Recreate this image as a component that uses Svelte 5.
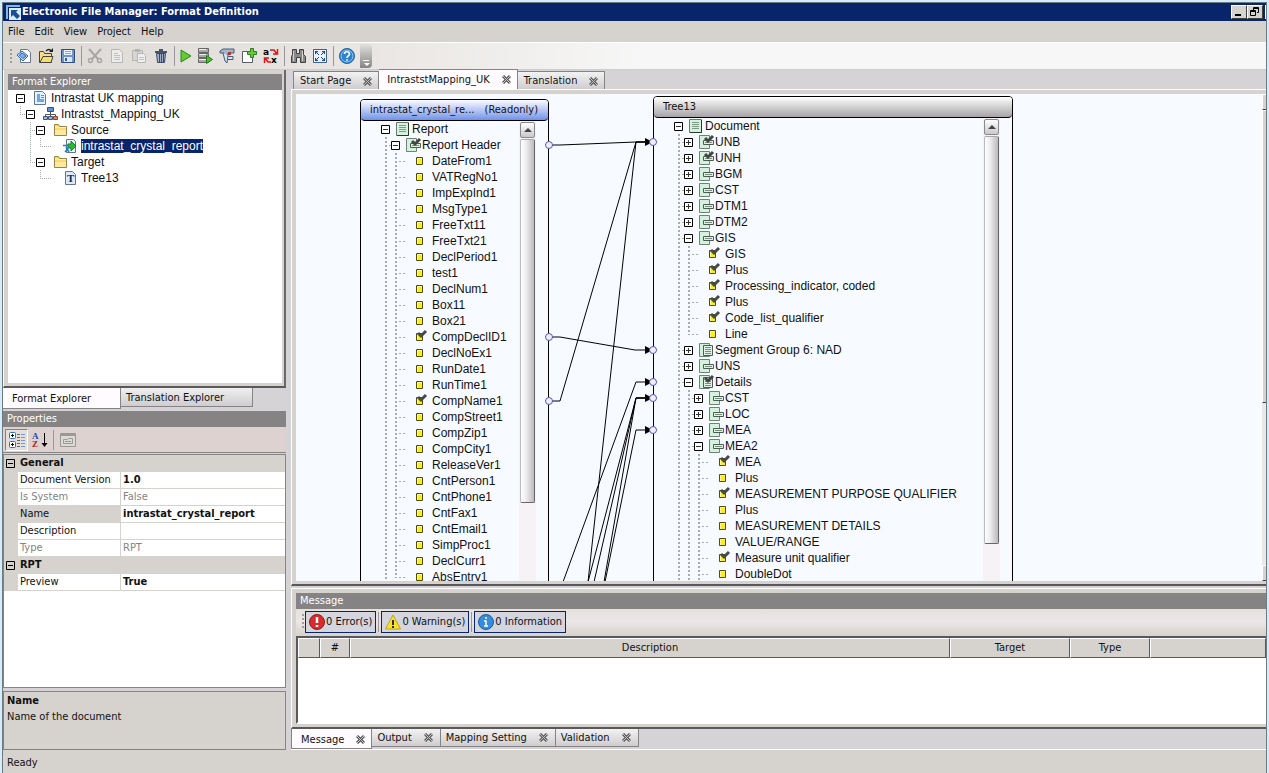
<script lang="ts">
	type Row = { guides: string; icon: string; text: string; open?: boolean };

	// guides: one character per ancestor column
	// "|" line, "+" tee, "L" corner, " " nothing
	const explorerRows: Row[] = [
		{ guides: "", icon: "doc", text: "Intrastat UK mapping", open: true },
		{ guides: "L", icon: "net", text: "Intrastst_Mapping_UK", open: true },
		{ guides: " +", icon: "folder", text: "Source", open: true },
		{ guides: " |L", icon: "report", text: "intrastat_crystal_report" },
		{ guides: " L", icon: "folder", text: "Target", open: true },
		{ guides: "  L", icon: "tree", text: "Tree13" },
	];

	const fields = [
		"DateFrom1", "VATRegNo1", "ImpExpInd1", "MsgType1", "FreeTxt11", "FreeTxt21",
		"DeclPeriod1", "test1", "DeclNum1", "Box11", "Box21", "CompDeclID1",
		"DeclNoEx1", "RunDate1", "RunTime1", "CompName1", "CompStreet1", "CompZip1",
		"CompCity1", "ReleaseVer1", "CntPerson1", "CntPhone1", "CntFax1", "CntEmail1",
		"SimpProc1", "DeclCurr1", "AbsEntry1",
	];
	const mapped = ["CompDeclID1", "CompName1"];

	const sourceRows: Row[] = [
		{ guides: "", icon: "page", text: "Report", open: true },
		{ guides: "+", icon: "segment-check", text: "Report Header", open: true },
		...fields.map((text, i) => ({
			guides: i == fields.length - 1 ? "|L" : "|+",
			icon: mapped.includes(text) ? "leaf-check" : "leaf",
			text,
		})),
	];

	const targetRows: Row[] = [
		{ guides: "", icon: "page", text: "Document", open: true },
		{ guides: "+", icon: "segment-check", text: "UNB", open: false },
		{ guides: "+", icon: "segment-check", text: "UNH", open: false },
		{ guides: "+", icon: "segment", text: "BGM", open: false },
		{ guides: "+", icon: "segment", text: "CST", open: false },
		{ guides: "+", icon: "segment", text: "DTM1", open: false },
		{ guides: "+", icon: "segment", text: "DTM2", open: false },
		{ guides: "+", icon: "segment", text: "GIS", open: true },
		{ guides: "|+", icon: "leaf-check", text: "GIS" },
		{ guides: "|+", icon: "leaf-check", text: "Plus" },
		{ guides: "|+", icon: "leaf-check", text: "Processing_indicator, coded" },
		{ guides: "|+", icon: "leaf-check", text: "Plus" },
		{ guides: "|+", icon: "leaf-check", text: "Code_list_qualifier" },
		{ guides: "|L", icon: "leaf", text: "Line" },
		{ guides: "+", icon: "group", text: "Segment Group 6: NAD", open: false },
		{ guides: "+", icon: "segment", text: "UNS", open: false },
		{ guides: "+", icon: "group-check", text: "Details", open: true },
		{ guides: "|+", icon: "segment", text: "CST", open: false },
		{ guides: "|+", icon: "segment", text: "LOC", open: false },
		{ guides: "|+", icon: "segment", text: "MEA", open: false },
		{ guides: "|+", icon: "segment", text: "MEA2", open: true },
		{ guides: "||+", icon: "leaf-check", text: "MEA" },
		{ guides: "||+", icon: "leaf", text: "Plus" },
		{ guides: "||+", icon: "leaf-check", text: "MEASUREMENT PURPOSE QUALIFIER" },
		{ guides: "||+", icon: "leaf", text: "Plus" },
		{ guides: "||+", icon: "leaf", text: "MEASUREMENT DETAILS" },
		{ guides: "||+", icon: "leaf", text: "VALUE/RANGE" },
		{ guides: "||+", icon: "leaf-check", text: "Measure unit qualifier" },
		{ guides: "||+", icon: "leaf", text: "DoubleDot" },
	];

	const wires = [
		"253,51 264,51 340,48 357,48",
		"253,307 264,307 340,48 357,48",
		"292,488 340,48 357,48",
		"253,243 264,243 339,256 357,256",
		"267,488 340,288 357,288",
		"292,488 340,304 357,304",
		"298,488 340,304 357,304",
		"308,488 340,304 357,304",
		"309,488 340,336 357,336",
	];
	const outPorts = [51, 243, 307];
	const inPorts = [48, 256, 288, 304, 336];

	const tools = [
		["new", "open", "save"],
		["cut", "copy", "paste", "delete"],
		["run", "server", "caliper", "add", "translate"],
		["find", "fit"],
		["help"],
	];
	const faded = ["cut", "copy", "paste"];

	const properties = [
		{ group: "General" },
		{ name: "Document Version", value: "1.0" },
		{ name: "Is System", value: "False", readonly: true },
		{ name: "Name", value: "intrastat_crystal_report" },
		{ name: "Description", value: "" },
		{ name: "Type", value: "RPT", readonly: true },
		{ group: "RPT" },
		{ name: "Preview", value: "True" },
	];

	const columns = ["", "#", "Description", "Target", "Type", ""];

	let selected = $state("intrastat_crystal_report");
	let property = $state("Name");
	let documentTab = $state("IntraststMapping_UK");
	let messageTab = $state("Message");
	let explorerTab = $state("Format Explorer");
</script>

{#snippet icon(name: string)}
	<svg class="icon" width="16" height="16" viewBox="0 0 16 16" aria-hidden="true">
		{#if name == "new"}
			<path d="M4.500 1.500h7l3 3v10h-10z" fill="#fff" stroke="#68778d" />
			<path d="M1 7l5-4 6 5-5 5z" fill="#b9d8f8" stroke="#3568b4" />
			<path d="M3.500 7l2.500-2 4 3-3 2.500z" fill="#7fb2ea" stroke="#3568b4" />
		{:else if name == "open"}
			<path d="M1.500 14.500v-11h4l1 2h7v9z" fill="#f7df8a" stroke="#40454d" />
			<path d="M2 14.500l3-6h10l-2 6z" fill="#ffdc67" stroke="#40454d" />
			<path d="M8 3c2-2 4-2 5 0" fill="none" stroke="#222" stroke-width="1.500" /><path d="M11 4h4V0z" fill="#222" />
		{:else if name == "save"}
			<path d="M1.500 1.500h13v13h-13z" fill="#7396c9" stroke="#304b7d" />
			<path d="M4 2h8v5H4z" fill="#e8f2ff" /><path d="M5 3.500h6M5 5.500h6" stroke="#8eabd2" /><path d="M4 9h8v5H4z" fill="#dce8f7" /><path d="M5 10h2v3H5z" fill="#355b91" />
		{:else if name == "cut"}
			<path d="M2 1l9 10M14 1L5 11" stroke="#9a9a9a" stroke-width="2" />
			<circle cx="3.500" cy="12.500" r="2" fill="none" stroke="#999" stroke-width="1.500" /><circle cx="12.500" cy="12.500" r="2" fill="none" stroke="#999" stroke-width="1.500" />
		{:else if name == "copy"}
			<path d="M2.500 1.500h8l3 3v10h-11z" fill="#f0f0f0" stroke="#b0aeac" /><path d="M5 5.500h4M5 7.500h6M5 9.500h6M5 11.500h6" stroke="#bbb" />
		{:else if name == "paste"}
			<path d="M1.500 2.500h10v10h-10z" fill="#d5d5d5" stroke="#aaa" /><path d="M4 1h5v3H4z" fill="#aaa" /><path d="M6.500 5.500h6l2 2v7h-8z" fill="#f4f4f4" stroke="#aaa" /><path d="M8 9.500h5M8 11.500h5" stroke="#bbb" />
		{:else if name == "delete"}
			<path d="M2 3h12v2H2zM6 1h4v2H6z" fill="#46536e" /><path d="M3.500 5.500h9l-1 9h-7z" fill="#a3b0c6" stroke="#3d4962" /><path d="M6.500 6v8M8.500 6v8M10.500 6v8" stroke="#3d4962" />
		{:else if name == "run"}
			<path d="M3 2l10 6-10 6z" fill="#67c934" stroke="#268a1d" />
		{:else if name == "server"}
			<path d="M1.500.5h10v4h-10zM1.500 5.500h10v4h-10zM1.500 10.500h10v4h-10z" fill="#a8a8a8" stroke="#666" /><path d="M2 1.500h7M2 6.500h7M2 11.500h7" stroke="#eee" /><path d="M9.500 7.500l6 4-6 4z" fill="#50bd29" stroke="#23781a" />
		{:else if name == "caliper"}
			<path d="M1 3l3-2h11v4H9v2H5V5H1z" fill="#a5b6d0" stroke="#4b5a79" /><path d="M4 5l2 8 2 2 1-8M9 8.500h5v3H9" fill="#d9e2f1" stroke="#4b5a79" /><path d="M9 4h3v3H9z" fill="#a33b31" />
		{:else if name == "add"}
			<path d="M1.500 3.500h10v11h-10z" fill="#fff" stroke="#555c66" /><path d="M9.500.5h3v3h3v3h-3v3h-3v-3h-3v-3h3z" fill="#6cc73e" stroke="#28801f" />
		{:else if name == "translate"}
			<text x="0" y="7" class="glyph">a</text><text x="8" y="15" class="glyph">x</text>
			<path d="M7 2h4l3 4M14.500 1v5H10M8 14H5L2 10M1.500 15v-5H6" fill="none" stroke="#e01414" stroke-width="1.500" />
		{:else if name == "find"}
			<path d="M2.500 1.500h4v4h3v-4h4v5l2 2v6h-5v-5h-4v5h-5v-6l1-2z" fill="#8a8a8a" stroke="#414141" /><path d="M3.500 3v10M12.500 3v10" stroke="#d0d0d0" />
		{:else if name == "fit"}
			<path d="M1.500 1.500h13v13h-13z" fill="#eaf3ff" stroke="#42608c" /><path d="M3 3h3.500L3 6.500zM13 3v3.500L9.500 3zM3 13V9.500L6.500 13zM13 13H9.500L13 9.500z" fill="#214a86" /><path d="M5 5l2 2M11 5L9 7M5 11l2-2M11 11L9 9" stroke="#214a86" />
		{:else if name == "help"}
			<circle cx="8" cy="8" r="7.500" fill="#2b83cf" stroke="#225e9a" /><circle cx="8" cy="8" r="6" fill="none" stroke="#8cc5f2" />
			<path d="M5.500 6c0-3 5-3 5 0 0 2-2.500 1.800-2.500 4M8 11.200v1.600" fill="none" stroke="#fff" stroke-width="1.700" />
		{:else if name == "doc"}
			<path d="M1.500 1.500h8l3 3v10h-11z" fill="#e5f1ff" stroke="#65758f" /><path d="M4 4h3v8H4zM7 9h4v3H7z" fill="#69a9e8" /><path d="M8 5.500h3M8 7.500h3" stroke="#4c8fd4" />
		{:else if name == "net"}
			<path d="M7.500 6v5M2.500 11V8.500h10V11" fill="none" stroke="#555" /><path d="M4.500 1.500h6v4h-6z" fill="#648fd3" stroke="#394f82" /><path d="M.5 10.500h4v3h-4zM5.500 10.500h4v3h-4z" fill="#9fb6de" stroke="#435577" /><path d="M10.500 10.500h4v3h-4z" fill="#e08a5c" stroke="#8d4632" />
		{:else if name == "folder"}
			<path d="M1.500 13.500v-11h4l1 2h7v9z" fill="#f9dc75" stroke="#9a8348" /><path d="M2 8h11v5H2z" fill="#ffe9a0" /><path d="M2 5.500h11" stroke="#fff5bb" />
		{:else if name == "report"}
			<path d="M3.500 1.500h7l2 2v11h-9z" fill="#eaf3ff" stroke="#65758f" /><path d="M5 6h3V3l5 5-5 5v-3H5z" fill="#2cba31" stroke="#168420" /><path d="M0 7.500h5M3 9l3 5M6 9l-4 5" stroke="#287bc2" stroke-width="1.500" />
		{:else if name == "tree"}
			<path d="M2.500 1.500h7l3 3v10h-10z" fill="#dce9f8" stroke="#65758f" /><text x="4" y="12" class="letter">T</text>
		{:else if name == "page"}
			<path d="M.5 1.500h12v13H.5z" fill="#d4f3dd" stroke="#6a7a70" /><path d="M12.500 2v12.500H1" fill="none" stroke="#27382e" /><path d="M3 4.500h7M3 6.500h7M3 8.500h7M3 10.500h7" stroke="#7d9a87" />
		{:else if name.startsWith("segment") || name.startsWith("group")}
			<path d="M.5 1.500h10v13H.5z" fill="#d4f3dd" stroke="#718078" />
			{#if name.startsWith("group")}
				<path d="M4.500 3.500h9v10h-9z" fill="#e2f2e6" stroke="#4c5c51" /><path d="M6 5.500h6M6 7.500h6M6 9.500h6M6 11.500h6" stroke="#7d8c82" />
			{:else}
				<path d="M4.500 6.500h10v4h-10z" fill="#ddf3e2" stroke="#4c5c51" /><path d="M6 8.500h7" stroke="#7d8c82" />
			{/if}
			{#if name.endsWith("check")}
				<path d="M6 4l3 3 5-5" fill="none" stroke="#454545" stroke-width="3" />
			{/if}
		{:else if name.startsWith("leaf")}
			<path d="M.5 4.500h6v7h-6z" fill="#ffed18" stroke="#4d4b12" /><path d="M1.500 11V5.500H6" fill="none" stroke="#fff98b" />
			{#if name == "leaf-check"}
				<path d="M2 4l3 3 5-5" fill="none" stroke="#494949" stroke-width="3" />
			{/if}
		{:else if name == "error"}
			<circle cx="8" cy="8" r="7.500" fill="#d92b2c" stroke="#8f1c20" /><path d="M8 3v6M8 11v2" stroke="#fff" stroke-width="2.500" />
		{:else if name == "warning"}
			<path d="M8 1l7.500 14H.5z" fill="#f6e32e" stroke="#c3a411" /><path d="M8 6v5M8 12v2" stroke="#343000" stroke-width="2" />
		{:else if name == "info"}
			<circle cx="8" cy="8" r="7.500" fill="#348cdc" stroke="#1e5d9e" /><path d="M8 3v2M6 7h2v5M6 12h4" fill="none" stroke="#fff" stroke-width="1.500" />
		{:else if name == "categories"}
			<rect x=".5" y=".5" width="6" height="6" rx="1" fill="#fff" stroke="#2d71bd" /><rect x=".5" y="9.500" width="6" height="6" rx="1" fill="#fff" stroke="#2d71bd" />
			<path d="M2 3.500h3M3.500 2v3M2 12.500h3M3.500 11v3" stroke="#000" /><path d="M8 2.500h3M8 5.500h3M8 8.500h3M8 11.500h3M8 14.500h3" stroke="#666" /><path d="M12 2.500h4M12 5.500h4M12 8.500h4M12 11.500h4M12 14.500h4" stroke="#7898d0" />
		{:else if name == "sort"}
			<text x="0" y="7" class="sort-a">A</text><text x="0" y="15" class="sort-z">Z</text><path d="M12.500 1v13" stroke="#000" /><path d="M9.500 11h6l-3 4z" />
		{:else if name == "pages"}
			<path d="M.5 1.500h15v13H.5z" fill="#ddd9d4" stroke="#9b9995" /><path d="M1 3h14" stroke="#9b9995" stroke-width="2" /><path d="M3.500 7.500h4l1-1h4v5h-9zM5 9.500h6" fill="none" stroke="#9b9995" />
		{/if}
	</svg>
{/snippet}

{#snippet tree(rows: Row[])}
	<ul class="rows">
		{#each rows as row}
			<li class="row">
				{#each row.guides as guide}
					<span class="guide" class:line={guide == "|" || guide == "+"} class:corner={guide == "L"} class:tick={guide == "+" || guide == "L"}></span>
				{/each}
				{#if row.open === undefined}
					<span class="blank"></span>
				{:else}
					<button class="expander" aria-label={row.open ? "Collapse " + row.text : "Expand " + row.text}>
						<svg width="9" height="9" viewBox="0 0 9 9" aria-hidden="true">
							<path d="M.5.5h8v8h-8z" fill="#fff" stroke="#000" />
							<path d={row.open ? "M2 4.500h5" : "M2 4.500h5M4.500 2v5"} stroke="#333" />
						</svg>
					</button>
				{/if}
				{@render icon(row.icon)}
				<button class="label" class:selected={row.text == selected} onclick={() => (selected = row.text)}>{row.text}</button>
			</li>
		{/each}
	</ul>
{/snippet}

{#snippet cross()}
	<svg class="cross" width="9" height="9" viewBox="0 0 9 9" aria-hidden="true">
		<path d="M1 1l7 7M8 1L1 8" stroke="#5a5a5a" stroke-width="3" />
		<path d="M1 1l7 7M8 1L1 8" stroke="#c4c4c4" />
	</svg>
{/snippet}

{#snippet scrollbar(kind: string)}
	<div class="scrollbar {kind}">
		<button class="scroll-up" aria-label="Scroll up">
			<svg width="8" height="4" viewBox="0 0 8 4" aria-hidden="true"><path d="M0 4l4-4 4 4z" fill="#444" /></svg>
		</button>
		<div class="thumb"></div>
	</div>
{/snippet}

<div class="window">
	<header class="title">
		<svg width="15" height="15" viewBox="0 0 15 15" aria-hidden="true">
			<path d="M0 0h14v2H2v12H0z" fill="#7fb8e8" /><path d="M3 3h12v12H3z" fill="#d9ecfa" /><path d="M5 5h7l-2 2 4 4-3 3-4-4-2 2z" fill="#1a4f96" />
		</svg>
		<h1>Electronic File Manager: Format Definition</h1>
		<button class="caption" aria-label="Minimize">
			<svg width="12" height="10" viewBox="0 0 12 10" aria-hidden="true"><path d="M2 7h6v2H2z" /></svg>
		</button>
		<button class="caption" aria-label="Restore">
			<svg width="12" height="10" viewBox="0 0 12 10" aria-hidden="true">
				<path d="M4.500 3V.5h5v5H8M4 1.500h6M1.500 3.500h5v5h-5zM1 4.500h6" fill="none" stroke="#000" />
			</svg>
		</button>
		<span class="clipped"></span>
	</header>

	<nav class="menu">
		{#each ["File", "Edit", "View", "Project", "Help"] as item}
			<button>{item}</button>
		{/each}
	</nav>

	<div class="toolbar">
		<span class="grip"></span>
		{#each tools as group, i}
			{#if i > 0}<span class="separator"></span>{/if}
			{#each group as tool}
				<button class="tool" class:faded={faded.includes(tool)} class:narrow={tool == "run"} aria-label={tool}>{@render icon(tool)}</button>
			{/each}
		{/each}
		<button class="overflow" aria-label="More tools">
			<svg width="7" height="6" viewBox="0 0 7 6" aria-hidden="true"><path d="M0 .5h6" stroke="#fff" /><path d="M1 3h6L4 6z" fill="#fff" /></svg>
		</button>
	</div>

	<main class="docks">
		<aside class="left">
			<section class="explorer">
				<h2>Format Explorer</h2>
				<div class="explorer-tree">{@render tree(explorerRows)}</div>
			</section>
			<div class="explorer-tabs">
				{#each ["Format Explorer", "Translation Explorer"] as tab}
					<button class="side-tab" class:active={explorerTab == tab} onclick={() => (explorerTab = tab)}>{tab}</button>
				{/each}
			</div>
			<section class="properties">
				<h2>Properties</h2>
				<div class="property-tools">
					<button class="pressed" aria-label="Categorized">{@render icon("categories")}</button>
					<button aria-label="Alphabetical">{@render icon("sort")}</button>
					<span class="separator"></span>
					<button aria-label="Property pages">{@render icon("pages")}</button>
				</div>
				<div class="property-grid">
					<table>
						<colgroup>
							<col class="margin-col" />
							<col class="name-col" />
							<col />
						</colgroup>
						<tbody>
							{#each properties as p}
								{#if p.group}
									<tr class="category">
										<td class="margin">
											<svg width="9" height="9" viewBox="0 0 9 9" aria-hidden="true"><path d="M.5.5h8v8h-8zM2 4.500h5" fill="none" stroke="#000" /></svg>
										</td>
										<th colspan="2">{p.group}</th>
									</tr>
								{:else}
									<tr class:readonly={p.readonly} class:current={property == p.name} onclick={() => (property = p.name ?? "")}>
										<td class="margin"></td>
										<th scope="row">{p.name}</th>
										<td class="value">{p.value}</td>
									</tr>
								{/if}
							{/each}
						</tbody>
					</table>
				</div>
				<div class="hint">
					<strong>Name</strong>
					<p>Name of the document</p>
				</div>
			</section>
		</aside>

		<div class="right">
			<div class="tabs top">
				{#each ["Start Page", "IntraststMapping_UK", "Translation"] as tab}
					<button class="tab" class:active={documentTab == tab} onclick={() => (documentTab = tab)}>{tab}{@render cross()}</button>
				{/each}
			</div>
			<section class="frame design">
				<div class="canvas">
					<article class="node source">
						<h3><span>intrastat_crystal_re...</span><span>(Readonly)</span></h3>
						<div class="node-body">
							{@render tree(sourceRows)}
							{@render scrollbar("short")}
						</div>
					</article>
					<article class="node target">
						<h3>Tree13</h3>
						<div class="node-body">
							{@render tree(targetRows)}
							{@render scrollbar("long")}
						</div>
					</article>
					<svg class="wires" aria-hidden="true">
						{#each wires as points}
							<polyline {points} fill="none" stroke="#000" />
						{/each}
						{#each inPorts as y}
							<path d="M349 {y - 4}l8 4-8 4z" />
							<circle cx="357" cy={y} r="3.500" />
						{/each}
						{#each outPorts as y}
							<circle cx="253" cy={y} r="3.500" />
						{/each}
					</svg>
				</div>
				<div class="edge-scroll">
					<span class="edge-button"></span>
					<span class="edge-thumb"></span>
					<span class="edge-space"></span>
					<span class="edge-button"></span>
				</div>
			</section>

			<section class="frame messages">
				<h2>Message</h2>
				<div class="filters">
					<span class="grip"></span>
					<button class="filter">{@render icon("error")}0 Error(s)</button>
					<span class="separator"></span>
					<button class="filter">{@render icon("warning")}0 Warning(s)</button>
					<span class="separator"></span>
					<button class="filter">{@render icon("info")}0 Information</button>
				</div>
				<div class="list">
					<table>
						<thead>
							<tr>
								{#each columns as column, i}
									<th class="col-{i}">{column}</th>
								{/each}
							</tr>
						</thead>
					</table>
				</div>
			</section>
			<div class="tabs bottom">
				{#each ["Message", "Output", "Mapping Setting", "Validation"] as tab}
					<button class="tab" class:active={messageTab == tab} onclick={() => (messageTab = tab)}>{tab}{@render cross()}</button>
				{/each}
			</div>
		</div>
	</main>

	<footer class="status">Ready</footer>
</div>

<style>
	:global(body) {
		margin: 0;
		background: #d3eefa;
	}
	:global(#app) {
		box-sizing: border-box;
		height: 100vh;
		padding: 2px 2px 0;
		overflow: hidden;
	}
	.window,
	.window * {
		box-sizing: border-box;
	}
	.window {
		display: flex;
		flex-direction: column;
		height: 100%;
		min-height: 600px;
		border: solid #6f7a80;
		border-width: 1px 1px 0;
		background: #d6d3ce;
		color: #111;
		font: 11px/14px "DejaVu Sans Condensed", "DejaVu Sans", sans-serif;
		overflow: hidden;
	}
	button {
		margin: 0;
		padding: 0;
		border: 0;
		background: none;
		color: inherit;
		font: inherit;
		white-space: nowrap;
	}
	svg {
		display: block;
		flex: none;
	}
	h1,
	h2,
	h3,
	p,
	ul {
		margin: 0;
		padding: 0;
		font: inherit;
	}
	h2 {
		flex: none;
		height: 16px;
		padding: 0 4px;
		line-height: 15px;
		background: #858384;
		color: #fff;
	}

	.title {
		display: flex;
		align-items: center;
		flex: none;
		height: 18px;
		padding-left: 3px;
		background: #08246b;
		color: #fff;
	}
	.title h1 {
		flex: 1;
		padding-left: 1px;
		font-weight: bold;
	}
	.caption {
		display: grid;
		place-items: center;
		width: 16px;
		height: 14px;
		background: #d6d3ce;
		border: 1px solid;
		border-color: #fff #404040 #404040 #fff;
	}
	.clipped {
		width: 1px;
		height: 14px;
		margin-left: 2px;
		background: #fff;
	}
	.menu {
		display: flex;
		flex: none;
		gap: 10px;
		height: 21px;
		padding: 1px 0 0 5px;
	}

	.toolbar {
		display: flex;
		align-items: center;
		flex: none;
		height: 28px;
		padding-left: 4px;
		border-top: 1px solid #fff;
		border-bottom: 1px solid #cfccd0;
		background: linear-gradient(90deg, #dddad6, #e9e6e3 370px, #ece9e6 420px, #f7f7f7 640px);
	}
	.grip {
		width: 2px;
		height: 15px;
		margin: 0 1px 0 3px;
		background: repeating-linear-gradient(#a09da0 0 2px, transparent 2px 4px);
	}
	.tool {
		display: grid;
		place-items: center;
		width: 22px;
		height: 22px;
	}
	.tool.narrow {
		width: 17px;
	}
	.tool.faded {
		opacity: 0.8;
	}
	.separator {
		width: 1px;
		height: 20px;
		margin: 0 2px;
		background: #9a979a;
	}
	.overflow {
		display: flex;
		align-items: flex-end;
		justify-content: center;
		width: 12px;
		height: 24px;
		margin-left: 2px;
		padding-bottom: 2px;
		border-radius: 0 4px 4px 0;
		background: linear-gradient(#e2e0de, #858585);
	}
	.glyph {
		font: bold 9px "DejaVu Sans", sans-serif;
	}
	.letter {
		font: bold 11px "Liberation Serif", serif;
		fill: #17294f;
	}
	.sort-a,
	.sort-z {
		font: bold 9px "Liberation Serif", serif;
		fill: #2446ab;
	}
	.sort-z {
		fill: #a52222;
	}

	.docks {
		display: flex;
		flex: 1;
		gap: 5px;
		min-height: 0;
		background: #d5d3d6;
	}
	.left {
		display: grid;
		grid-template-rows: 318px 23px minmax(0, 1fr);
		flex: none;
		width: 283px;
	}
	.explorer {
		display: flex;
		flex-direction: column;
		padding: 4px 2px 3px 4px;
		background: #d6d3ce;
		border: solid;
		border-color: #fff #6a686a #5a585a #fff;
		border-width: 0 2px 2px 1px;
	}
	.explorer-tree {
		flex: 1;
		padding-left: 8px;
		background: #fff;
		--icon-gap: 7px;
		--label-gap: 2px;
		--guide-width: 1px;
	}
	.explorer-tabs {
		display: flex;
		align-items: flex-start;
	}
	.side-tab {
		height: 19px;
		padding: 1px 28px 0 5px;
		border: solid #858384;
		border-width: 0 1px 1px 0;
		background: linear-gradient(#f0eff0, #cfcdcf);
		text-align: left;
	}
	.side-tab.active {
		width: 118px;
		height: 21px;
		padding: 2px 0 0 9px;
		background: #fffbff;
	}

	.properties {
		display: flex;
		flex-direction: column;
		min-height: 0;
	}
	.property-tools {
		display: flex;
		align-items: center;
		flex: none;
		height: 26px;
		padding-left: 2px;
		background: #ddd2cf;
		border-bottom: 1px solid #858384;
	}
	.property-tools button {
		display: grid;
		place-items: center;
		width: 23px;
		height: 22px;
	}
	.property-tools .pressed {
		border: 1px solid;
		border-color: #858384 #fff #fff #858384;
		background: #e4dfda;
	}
	.property-grid {
		flex: 1;
		min-height: 0;
		margin-top: 1px;
		border: 1px solid #858384;
		background: #fff;
		overflow: hidden;
	}
	table {
		width: 100%;
		border-collapse: separate;
		border-spacing: 0;
		table-layout: fixed;
	}
	.margin-col {
		width: 14px;
	}
	.name-col {
		width: 103px;
	}
	.property-grid td,
	.property-grid th {
		height: 17px;
		padding: 0 0 0 2px;
		border-bottom: 1px solid #d6d3ce;
		font-weight: normal;
		line-height: 14px;
		text-align: left;
		white-space: nowrap;
	}
	.property-grid .margin {
		background: #d6d3ce;
	}
	.property-grid th {
		border-right: 1px solid #d6d3ce;
	}
	.property-grid .category th {
		background: #d6d3ce;
		font-weight: bold;
	}
	.property-grid .value {
		font-weight: bold;
	}
	.readonly th,
	.property-grid .readonly .value {
		color: #858384;
		font-weight: normal;
	}
	.current th {
		background: #d6d3ce;
	}
	.hint {
		flex: none;
		height: 59px;
		margin-top: 3px;
		padding: 2px 3px;
		border: 1px solid #858384;
		background: #d6d3ce;
	}
	.hint p {
		padding-top: 2px;
	}

	.rows {
		list-style: none;
		font: 12px/16px "Liberation Sans", Arial, sans-serif;
	}
	.row {
		display: flex;
		align-items: center;
		height: 16px;
	}
	.row .icon {
		margin-right: var(--label-gap);
	}
	.guide {
		position: relative;
		flex: none;
		width: 10px;
		height: 16px;
	}
	.line::before,
	.corner::before {
		content: "";
		position: absolute;
		top: 0;
		left: 4px;
		width: var(--guide-width);
		height: 16px;
		background: repeating-linear-gradient(#a8abb0 0 var(--guide-width), transparent var(--guide-width) calc(2 * var(--guide-width)));
	}
	.corner::before {
		height: 8px;
	}
	.tick::after {
		content: "";
		position: absolute;
		top: 8px;
		left: 4px;
		width: 11px;
		height: 1px;
		background: repeating-linear-gradient(90deg, #a8abb0 0 var(--guide-width), transparent var(--guide-width) calc(2 * var(--guide-width)));
	}
	.blank,
	.expander {
		position: relative;
		flex: none;
		width: 10px;
		margin-right: var(--icon-gap);
	}
	.label {
		height: 16px;
		line-height: 16px;
	}
	.label.selected {
		height: 14px;
		line-height: 14px;
		background: #08246b;
		color: #fff;
	}

	.right {
		display: flex;
		flex-direction: column;
		flex: 1;
		min-width: 0;
	}
	.tabs {
		display: flex;
		flex: none;
		align-items: flex-end;
		height: 19px;
		padding-left: 2px;
	}
	.tab {
		display: flex;
		align-items: center;
		gap: 12px;
		height: 18px;
		padding: 1px 6px 0;
		border: 1px solid #858384;
		border-left-width: 0;
		border-bottom-width: 0;
		background: linear-gradient(#f3f2f3, #cfcdcf);
	}
	.tab:first-child {
		border-left-width: 1px;
	}
	.tab.active {
		height: 20px;
		padding: 0 6px 0 8px;
		background: #fffbff;
	}
	.bottom {
		align-items: flex-start;
		height: 21px;
		padding-left: 0;
		border-bottom: 1px solid #fff;
	}
	.bottom .tab {
		padding: 0 7px 0 5px;
		border-width: 0 1px 1px 0;
	}
	.bottom .tab.active {
		padding: 2px 6px 0 9px;
		border-left-width: 1px;
	}

	.frame {
		background: #d6d3ce;
		border: solid;
		border-color: #fff #fff #5a585a;
		border-width: 1px 0 2px 1px;
	}
	.design {
		display: flex;
		flex: 1;
		min-height: 0;
		padding: 4px 0 3px 4px;
		margin-bottom: 2px;
	}
	.canvas {
		position: relative;
		flex: 1;
		background: #f7fbff;
		overflow: hidden;
	}
	.edge-scroll {
		display: flex;
		flex-direction: column;
		flex: none;
		width: 4px;
		background: #ebe9e6;
	}
	.edge-button,
	.edge-thumb {
		height: 16px;
		border: solid;
		border-color: #fff #404040 #404040 #fff;
		border-width: 1px 0 1px 1px;
		background: #d6d3ce;
	}
	.edge-thumb {
		height: 293px;
	}
	.edge-space {
		flex: 1;
	}
	.node {
		position: absolute;
		top: 5px;
		left: 64px;
		width: 189px;
		height: 700px;
		border: 1px solid #000;
		border-radius: 4px;
		background: #f7fbff;
		--icon-gap: 5px;
		--label-gap: 0px;
		--guide-width: 2px;
	}
	.target {
		top: 2px;
		left: 357px;
		width: 360px;
	}
	.node h3 {
		display: flex;
		justify-content: space-between;
		height: 21px;
		padding: 0 10px 0 9px;
		border-bottom: 1px solid #000;
		border-radius: 3px 3px 4px 4px;
		background: linear-gradient(#fbfaff, #a9bdf3 60%, #6f93ea);
		line-height: 19px;
	}
	.target h3 {
		background: linear-gradient(#fff, #d2d1d2 50%, #a5a3a5);
	}
	.node-body {
		display: flex;
		padding: 0 12px 0 20px;
	}
	.node .rows {
		flex: 1;
		min-width: 0;
	}
	.scrollbar {
		width: 17px;
		height: 670px;
		padding: 1px;
		background: #f7f2f6;
	}
	.scroll-up {
		display: grid;
		place-items: center;
		width: 15px;
		height: 16px;
		border: 1px solid #8a888a;
		border-radius: 2px;
		background: linear-gradient(#fff, #cac8ca);
	}
	.thumb {
		height: 364px;
		margin-top: 1px;
		border: 1px solid;
		border-color: #aaa8aa #666 #666 #bbb;
		border-radius: 2px;
		background: linear-gradient(90deg, #fff, #edebed 40%, #bcbabc);
	}
	.long .thumb {
		height: 408px;
	}
	.wires {
		position: absolute;
		inset: 0;
		width: 100%;
		height: 100%;
		pointer-events: none;
	}
	.wires circle {
		fill: #ededff;
		stroke: #5656b8;
	}

	.messages {
		flex: none;
		padding: 4px 0 3px 4px;
	}
	.filters {
		display: flex;
		align-items: center;
		height: 27px;
		padding: 0 0 2px 3px;
		background: linear-gradient(#e4e1dc, #ece7e7 45%, #d8d2cc);
	}
	.filter {
		display: flex;
		align-items: center;
		gap: 1px;
		height: 22px;
		padding: 0 3px;
		border: 1px solid #08246b;
		background: #d5d5de;
	}
	.list {
		height: 88px;
		border: solid;
		border-color: #5a585a #d6d3ce #fff #5a585a;
		border-width: 2px 0 2px 2px;
		background: #fff;
		overflow: hidden;
	}
	.list th {
		height: 20px;
		padding: 0;
		border: 1px solid;
		border-color: #fff #5a585a #5a585a #fff;
		background: #d6d3ce;
		font-weight: normal;
	}
	.col-0 {
		width: 22px;
	}
	.col-1 {
		width: 30px;
	}
	.col-2 {
		width: 600px;
	}
	.col-3 {
		width: 120px;
	}
	.col-4 {
		width: 80px;
	}

	.status {
		flex: none;
		height: 23px;
		padding: 6px 4px 0;
	}
</style>
